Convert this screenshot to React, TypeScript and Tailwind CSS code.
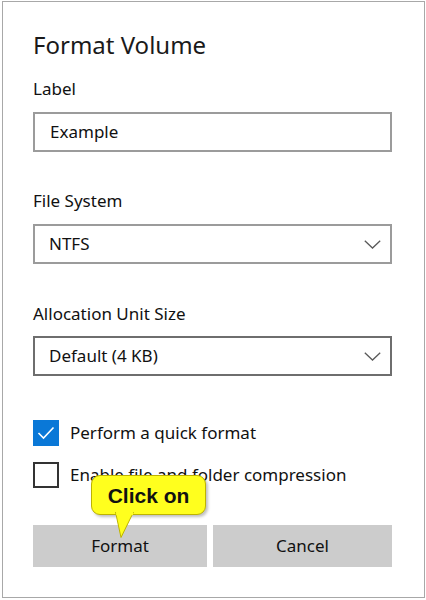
import React from "react";

const font = { fontFamily: '"Noto Sans", "Open Sans", sans-serif' };

function Chevron() {
  return (
    <svg width="17" height="9" viewBox="0 0 17 9" className="shrink-0">
      <path d="M0.8 0.8 L8.5 8 L16.2 0.8" fill="none" stroke="#5a5a5a" strokeWidth="1.3" />
    </svg>
  );
}

function Select({ value, dark }: { value: string; dark?: boolean }) {
  return (
    <div
      className={`h-[40px] w-full border-2 ${dark ? "border-[#6e6e6e]" : "border-[#9b9b9b]"} bg-white flex items-center pl-[14px] pr-[9px] justify-between`}
    >
      <span className="text-[17px] text-[#111]">{value}</span>
      <Chevron />
    </div>
  );
}

export default function App() {
  return (
    <div className="relative w-[426px] h-[600px] bg-white pl-[2px] pt-[1px]" style={font}>
      <div className="w-[423px] h-[597px] border border-[#a8a8a8] pl-[30px] pr-[32px] flex flex-col">
        <div className="mt-[27px] h-8 leading-8 text-[24px] text-[#1a1a1a]">Format Volume</div>

        <div className="mt-[16px] h-6 leading-6 text-[17px] text-[#111]">Label</div>
        <div className="mt-[11px] h-[40px] w-full border-2 border-[#9b9b9b] flex items-center pl-[15px]">
          <span className="text-[17px] text-[#111]">Example</span>
        </div>

        <div className="mt-[37px] h-6 leading-6 text-[17px] text-[#111]">File System</div>
        <div className="mt-[11px]">
          <Select value="NTFS" />
        </div>

        <div className="mt-[38px] h-6 leading-6 text-[17px] text-[#111]">Allocation Unit Size</div>
        <div className="mt-[10px]">
          <Select value="Default (4 KB)" dark />
        </div>

        <div className="mt-[44px] h-[26px] flex items-center gap-[11px]">
          <div className="w-[26px] h-[26px] bg-[#0a78d7] flex items-center justify-center shrink-0">
            <svg width="18" height="14" viewBox="0 0 18 14">
              <path d="M1.5 7 L6.5 12 L16.5 1.5" fill="none" stroke="white" strokeWidth="1.6" />
            </svg>
          </div>
          <span className="text-[17px] text-[#111]">Perform a quick format</span>
        </div>

        <div className="mt-[16px] h-[26px] flex items-center gap-[11px]">
          <div className="w-[26px] h-[26px] border-2 border-[#333] bg-white shrink-0" />
          <span className="text-[17px] text-[#111]">Enable file and folder compression</span>
        </div>

        <div className="mt-[37px] flex gap-[6px]">
          <div className="w-[174px] h-[42px] bg-[#cccccc] flex items-center justify-center text-[17px] text-[#111]">
            Format
          </div>
          <div className="flex-1 h-[42px] bg-[#cccccc] flex items-center justify-center text-[17px] text-[#111]">
            Cancel
          </div>
        </div>
      </div>

      {/* Callout */}
      <div className="absolute left-[91px] top-[475px] w-[115px] h-[40px]">
        <div
          className="absolute inset-0 rounded-[9px] bg-[#ffff1e] border border-[#bdb300] flex items-center justify-center shadow-[2px_2px_3px_rgba(0,0,0,0.25)]"
        >
          <span
            className="text-[21px] font-bold text-[#111] leading-none"
            style={{ fontFamily: '"Liberation Sans", Arial, sans-serif' }}
          >
            Click on
          </span>
        </div>
        <svg
          className="absolute left-[23px] top-[37px]"
          width="22"
          height="28"
          viewBox="0 0 22 28"
        >
          <path d="M1.5 0 L7 25.5 L19.5 0" fill="#ffff1e" stroke="#bdb300" strokeWidth="1" />
          <rect x="2.2" y="0" width="16.8" height="3.2" fill="#ffff1e" />
        </svg>
      </div>
    </div>
  );
}
